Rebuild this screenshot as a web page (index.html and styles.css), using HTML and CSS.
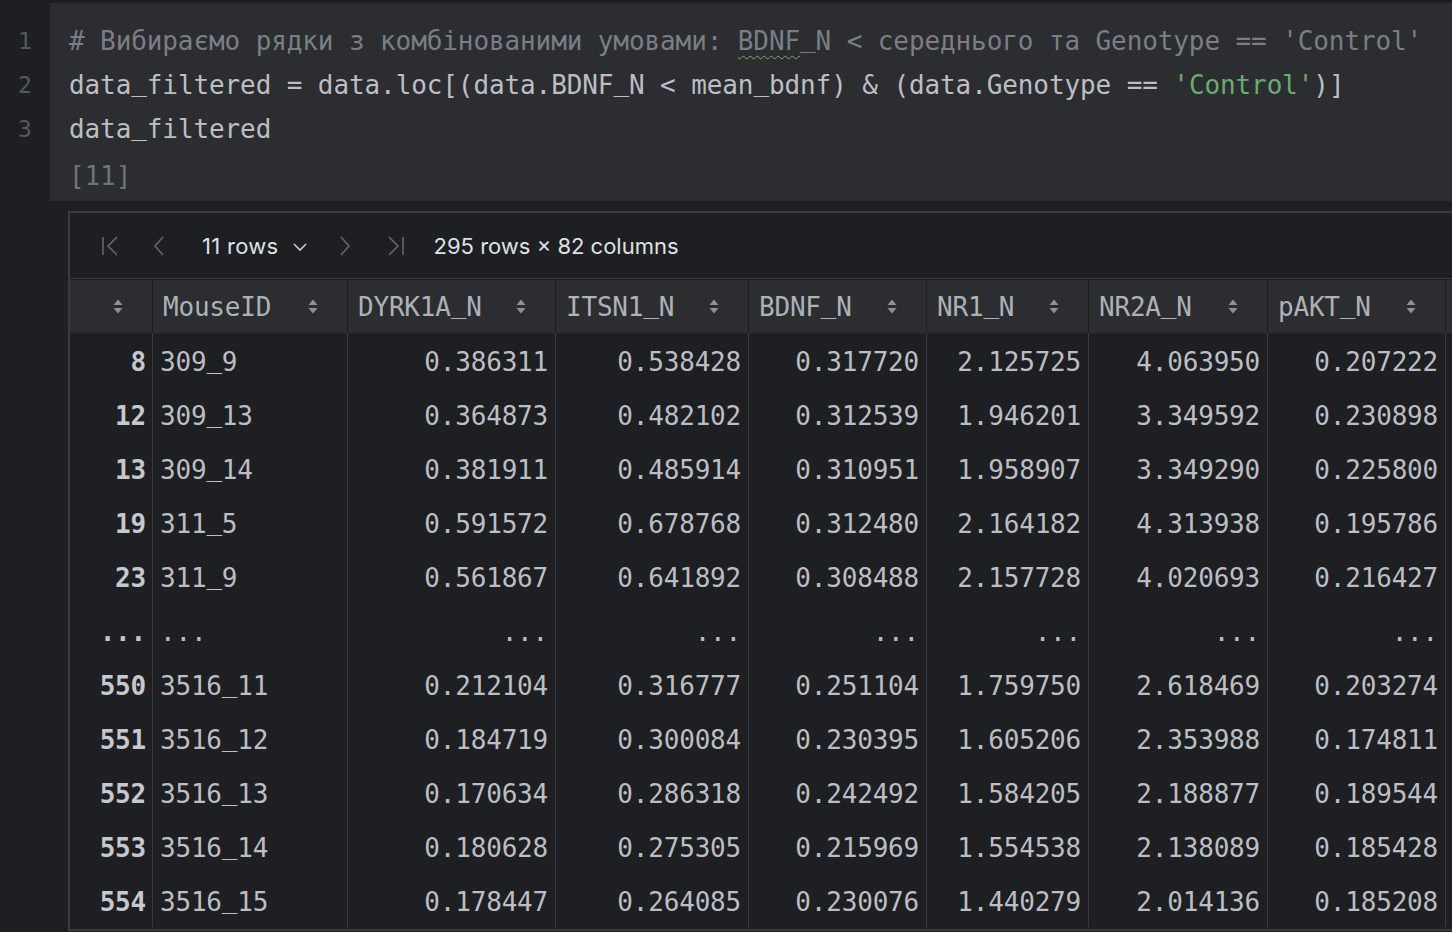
FILE: index.html
```html
<!DOCTYPE html>
<html lang="uk">
<head>
<meta charset="utf-8">
<title>data_filtered</title>
<link rel="stylesheet" href="styles.css">
</head>
<body>
<div class="cell">
  <div class="gutter">
    <div class="ln">1</div>
    <div class="ln">2</div>
    <div class="ln">3</div>
  </div>
  <div class="editor">
    <div class="line comment"># Вибираємо рядки з комбінованими умовами: <span class="typo">BDNF</span><span class="us">_</span>N &lt; середнього та Genotype == 'Control'</div>
    <div class="line">data<span class="us">_</span>filtered = data.loc[(data.BDNF<span class="us">_</span>N &lt; mean<span class="us">_</span>bdnf) &amp; (data.Genotype == <span class="str">'Control'</span>)]</div>
    <div class="line">data<span class="us">_</span>filtered</div>
    <div class="line count">[11]</div>
  </div>
</div>

<div class="output">
  <div class="toolbar">
    <svg class="tb-icon first" width="22" height="22" viewBox="0 0 22 22"><path d="M3 2v18M17 2L8 11l9 9" fill="none" stroke="currentColor" stroke-width="1.6"/></svg>
    <svg class="tb-icon prev" width="12" height="22" viewBox="0 0 12 22"><path d="M10 2L2 11l8 9" fill="none" stroke="currentColor" stroke-width="1.6"/></svg>
    <span class="tb-rows">11 rows</span>
    <svg class="tb-chev" width="16" height="10" viewBox="0 0 16 10"><path d="M2 2l6 6 6-6" fill="none" stroke="currentColor" stroke-width="1.6"/></svg>
    <svg class="tb-icon next" width="12" height="22" viewBox="0 0 12 22"><path d="M2 2l8 9-8 9" fill="none" stroke="currentColor" stroke-width="1.6"/></svg>
    <svg class="tb-icon last" width="22" height="22" viewBox="0 0 22 22"><path d="M19 2v18M5 2l9 9-9 9" fill="none" stroke="currentColor" stroke-width="1.6"/></svg>
    <span class="tb-info">295 rows × 82 columns</span>
  </div>

  <div class="table">
    <div class="row head">
      <div class="hc idx"><svg class="sort" width="10" height="15" viewBox="0 0 10 15"><path d="M5 0.5L9.5 6H0.5Z M0.5 9H9.5L5 14.5Z" fill="currentColor"/></svg></div>
      <div class="hc"><span>MouseID</span><svg class="sort" width="10" height="15" viewBox="0 0 10 15"><path d="M5 0.5L9.5 6H0.5Z M0.5 9H9.5L5 14.5Z" fill="currentColor"/></svg></div>
      <div class="hc"><span>DYRK1A<span class="us">_</span>N</span><svg class="sort" width="10" height="15" viewBox="0 0 10 15"><path d="M5 0.5L9.5 6H0.5Z M0.5 9H9.5L5 14.5Z" fill="currentColor"/></svg></div>
      <div class="hc"><span>ITSN1<span class="us">_</span>N</span><svg class="sort" width="10" height="15" viewBox="0 0 10 15"><path d="M5 0.5L9.5 6H0.5Z M0.5 9H9.5L5 14.5Z" fill="currentColor"/></svg></div>
      <div class="hc"><span>BDNF<span class="us">_</span>N</span><svg class="sort" width="10" height="15" viewBox="0 0 10 15"><path d="M5 0.5L9.5 6H0.5Z M0.5 9H9.5L5 14.5Z" fill="currentColor"/></svg></div>
      <div class="hc"><span>NR1<span class="us">_</span>N</span><svg class="sort" width="10" height="15" viewBox="0 0 10 15"><path d="M5 0.5L9.5 6H0.5Z M0.5 9H9.5L5 14.5Z" fill="currentColor"/></svg></div>
      <div class="hc"><span>NR2A<span class="us">_</span>N</span><svg class="sort" width="10" height="15" viewBox="0 0 10 15"><path d="M5 0.5L9.5 6H0.5Z M0.5 9H9.5L5 14.5Z" fill="currentColor"/></svg></div>
      <div class="hc"><span>pAKT<span class="us">_</span>N</span><svg class="sort" width="10" height="15" viewBox="0 0 10 15"><path d="M5 0.5L9.5 6H0.5Z M0.5 9H9.5L5 14.5Z" fill="currentColor"/></svg></div>
      <div class="hc"></div>
    </div>

    <div class="row"><div class="c idx">8</div><div class="c id"><span>309<span class="us">_</span>9</span></div><div class="c">0.386311</div><div class="c">0.538428</div><div class="c">0.317720</div><div class="c">2.125725</div><div class="c">4.063950</div><div class="c">0.207222</div><div class="c"></div></div>
    <div class="row"><div class="c idx">12</div><div class="c id"><span>309<span class="us">_</span>13</span></div><div class="c">0.364873</div><div class="c">0.482102</div><div class="c">0.312539</div><div class="c">1.946201</div><div class="c">3.349592</div><div class="c">0.230898</div><div class="c"></div></div>
    <div class="row"><div class="c idx">13</div><div class="c id"><span>309<span class="us">_</span>14</span></div><div class="c">0.381911</div><div class="c">0.485914</div><div class="c">0.310951</div><div class="c">1.958907</div><div class="c">3.349290</div><div class="c">0.225800</div><div class="c"></div></div>
    <div class="row"><div class="c idx">19</div><div class="c id"><span>311<span class="us">_</span>5</span></div><div class="c">0.591572</div><div class="c">0.678768</div><div class="c">0.312480</div><div class="c">2.164182</div><div class="c">4.313938</div><div class="c">0.195786</div><div class="c"></div></div>
    <div class="row"><div class="c idx">23</div><div class="c id"><span>311<span class="us">_</span>9</span></div><div class="c">0.561867</div><div class="c">0.641892</div><div class="c">0.308488</div><div class="c">2.157728</div><div class="c">4.020693</div><div class="c">0.216427</div><div class="c"></div></div>
    <div class="row"><div class="c idx">...</div><div class="c id">...</div><div class="c">...</div><div class="c">...</div><div class="c">...</div><div class="c">...</div><div class="c">...</div><div class="c">...</div><div class="c"></div></div>
    <div class="row"><div class="c idx">550</div><div class="c id"><span>3516<span class="us">_</span>11</span></div><div class="c">0.212104</div><div class="c">0.316777</div><div class="c">0.251104</div><div class="c">1.759750</div><div class="c">2.618469</div><div class="c">0.203274</div><div class="c"></div></div>
    <div class="row"><div class="c idx">551</div><div class="c id"><span>3516<span class="us">_</span>12</span></div><div class="c">0.184719</div><div class="c">0.300084</div><div class="c">0.230395</div><div class="c">1.605206</div><div class="c">2.353988</div><div class="c">0.174811</div><div class="c"></div></div>
    <div class="row"><div class="c idx">552</div><div class="c id"><span>3516<span class="us">_</span>13</span></div><div class="c">0.170634</div><div class="c">0.286318</div><div class="c">0.242492</div><div class="c">1.584205</div><div class="c">2.188877</div><div class="c">0.189544</div><div class="c"></div></div>
    <div class="row"><div class="c idx">553</div><div class="c id"><span>3516<span class="us">_</span>14</span></div><div class="c">0.180628</div><div class="c">0.275305</div><div class="c">0.215969</div><div class="c">1.554538</div><div class="c">2.138089</div><div class="c">0.185428</div><div class="c"></div></div>
    <div class="row"><div class="c idx">554</div><div class="c id"><span>3516<span class="us">_</span>15</span></div><div class="c">0.178447</div><div class="c">0.264085</div><div class="c">0.230076</div><div class="c">1.440279</div><div class="c">2.014136</div><div class="c">0.185208</div><div class="c"></div></div>
  </div>
</div>
</body>
</html>
```

FILE: styles.css
```css
* { box-sizing: border-box; }

html, body {
  margin: 0;
  padding: 0;
  background: #1e1f22;
  overflow: hidden;
  width: 1452px;
  height: 932px;
}

body {
  font-family: "DejaVu Sans Mono", "Liberation Mono", monospace;
  color: #bcbec4;
}

/* underscore glyph: lifted to sit on the baseline like JetBrains Mono */
.us {
  vertical-align: 3px;
  line-height: 0;
}

/* ---------- code cell ---------- */
.cell {
  display: flex;
  margin-top: 3px;
}

.gutter {
  width: 50px;
  flex: none;
  padding-top: 16px;
}

.ln {
  height: 44px;
  line-height: 44px;
  text-align: center;
  font-size: 23px;
  color: #55585e;
}

.editor {
  flex: 1;
  background: #2b2d30;
  padding: 16px 0 3px 19px;
  height: 198px;
}

.line {
  height: 44px;
  line-height: 44px;
  font-size: 26px;
  letter-spacing: -0.1px;
  white-space: pre;
  color: #bcbec4;
}

.comment { color: #7a7e85; }

.typo {
  text-decoration-line: underline;
  text-decoration-style: wavy;
  text-decoration-color: #5fb865;
  text-decoration-thickness: 1px;
  text-underline-offset: 5px;
}

.str { color: #6aab73; }

.count {
  margin-top: 3px;
  color: #6f737a;
}

/* ---------- output ---------- */
.output {
  margin: 10px 0 0 68px;
  border: 2px solid #393b40;
  border-right: none;
  overflow: hidden;
  height: 720px;
}

.toolbar {
  height: 66px;
  display: flex;
  align-items: center;
  padding-left: 30px;
  border-bottom: 1px solid #393b40;
  font-family: Inter, "Noto Sans", sans-serif;
  color: #dfe1e5;
}

.tb-icon { color: #63666c; flex: none; }
.tb-icon.first { margin-right: 31px; }
.tb-icon.prev { margin-right: 37px; }
.tb-rows { font-size: 22px; letter-spacing: 0.3px; }
.tb-chev { color: #c8cacf; margin: 3px 0 0 13px; }
.tb-icon.next { margin-left: 31px; }
.tb-icon.last { margin-left: 33px; }
.tb-info { font-size: 22px; margin-left: 28px; letter-spacing: 0; }

.table { width: 1576px; }

.row {
  display: grid;
  grid-template-columns: 83px 195px 208px 193px 178px 162px 179px 178px 200px;
  height: 54px;
}

.row.head {
  height: 53px;
  margin-top: 1px;
}

.hc {
  background: #2b2d30;
  border-right: 1px solid #1e1f22;
  display: flex;
  align-items: center;
  justify-content: space-between;
  padding: 0 29px 0 10px;
  font-size: 26px;
  letter-spacing: -0.2px;
  color: #aeb1b6;
  white-space: nowrap;
}

.hc.idx { justify-content: flex-end; }

.sort { color: #8e9196; flex: none; }

.c {
  border-right: 1px solid #393b40;
  display: flex;
  align-items: center;
  justify-content: flex-end;
  padding: 3px 7px 0;
  font-size: 26px;
  letter-spacing: -0.2px;
  color: #bcbec4;
  white-space: nowrap;
}

.c.idx {
  font-weight: bold;
  color: #c6c8cd;
  padding-right: 6px;
}

.c.id { justify-content: flex-start; }
```
